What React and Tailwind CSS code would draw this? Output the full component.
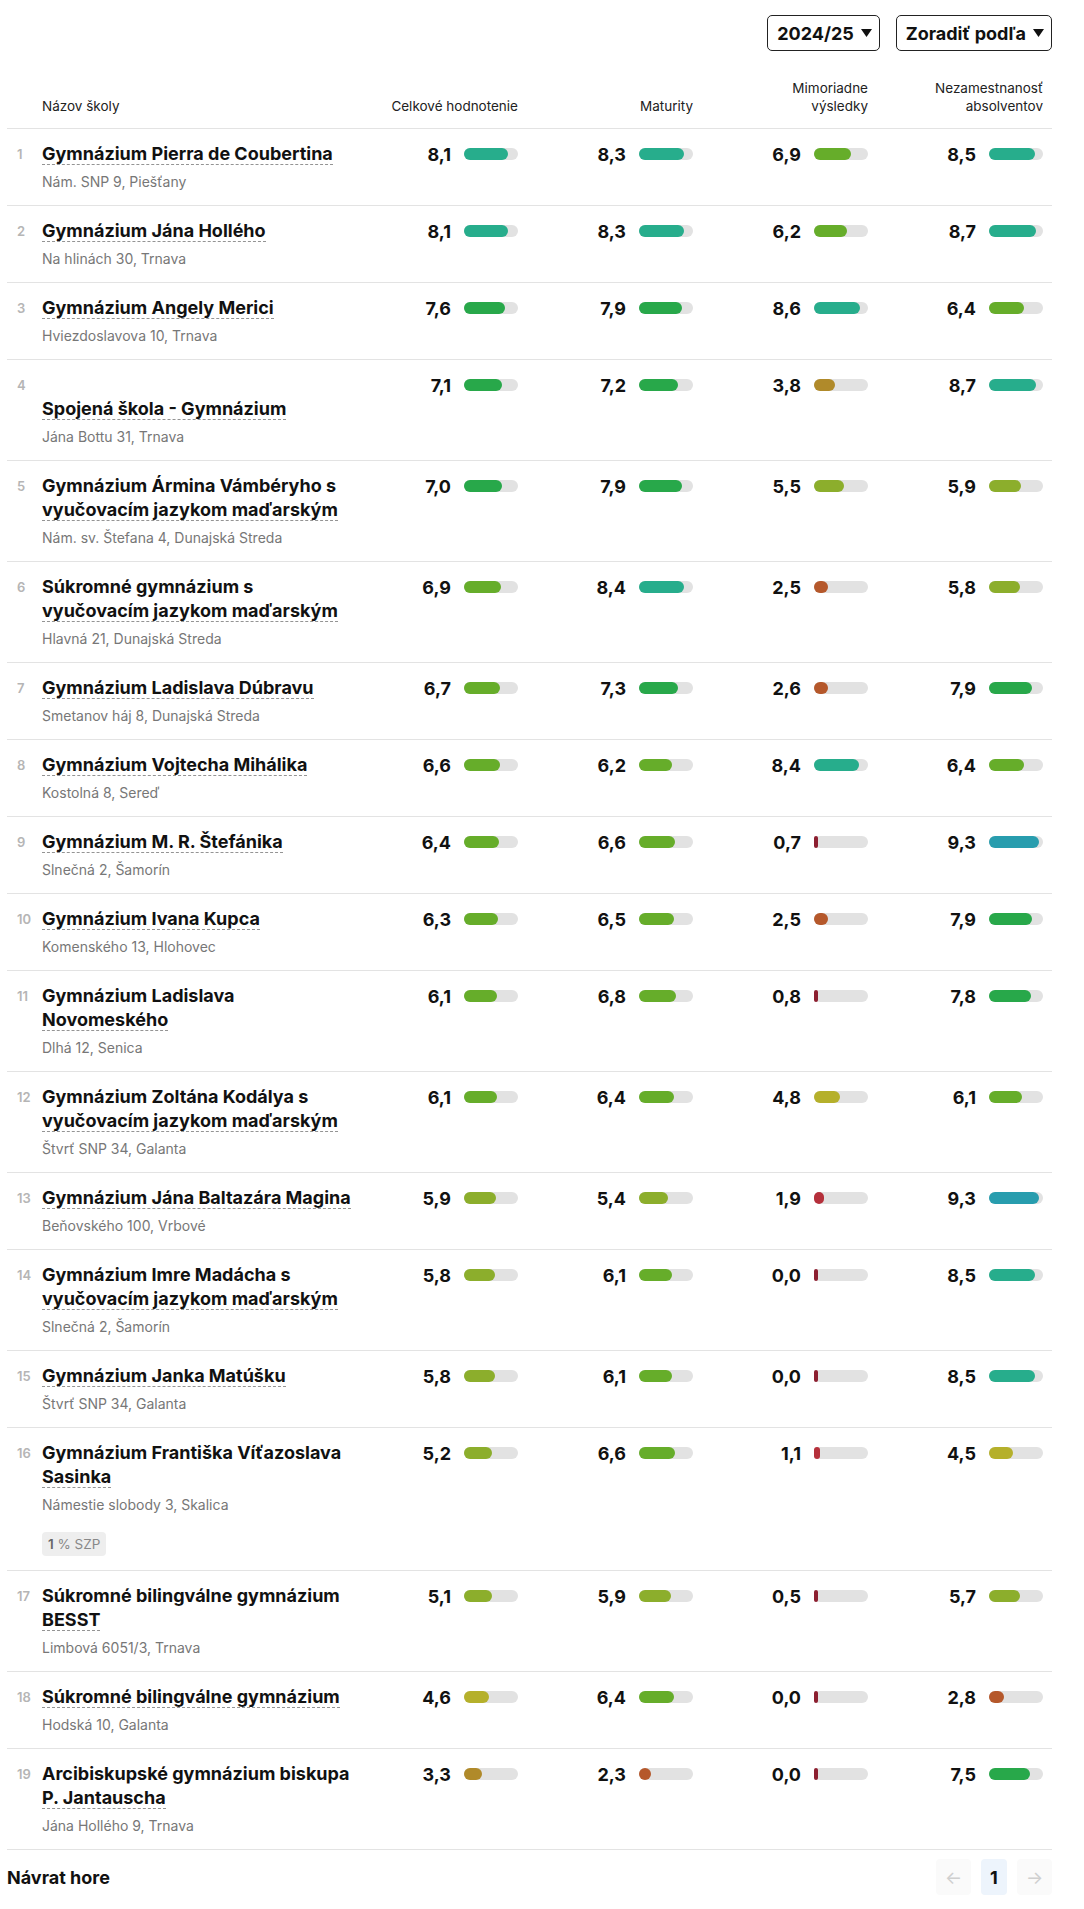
import React from 'react';

const ROWS = [
  { name: ['Gymnázium Pierra de Coubertina'], addr: 'Nám. SNP 9, Piešťany', s: [8.1, 8.3, 6.9, 8.5] },
  { name: ['Gymnázium Jána Hollého'], addr: 'Na hlinách 30, Trnava', s: [8.1, 8.3, 6.2, 8.7] },
  { name: ['Gymnázium Angely Merici'], addr: 'Hviezdoslavova 10, Trnava', s: [7.6, 7.9, 8.6, 6.4] },
  { name: ['', 'Spojená škola - Gymnázium'], addr: 'Jána Bottu 31, Trnava', s: [7.1, 7.2, 3.8, 8.7] },
  { name: ['Gymnázium Ármina Vámbéryho s', 'vyučovacím jazykom maďarským'], addr: 'Nám. sv. Štefana 4, Dunajská Streda', s: [7.0, 7.9, 5.5, 5.9] },
  { name: ['Súkromné gymnázium s', 'vyučovacím jazykom maďarským'], addr: 'Hlavná 21, Dunajská Streda', s: [6.9, 8.4, 2.5, 5.8] },
  { name: ['Gymnázium Ladislava Dúbravu'], addr: 'Smetanov háj 8, Dunajská Streda', s: [6.7, 7.3, 2.6, 7.9] },
  { name: ['Gymnázium Vojtecha Mihálika'], addr: 'Kostolná 8, Sereď', s: [6.6, 6.2, 8.4, 6.4] },
  { name: ['Gymnázium M. R. Štefánika'], addr: 'Slnečná 2, Šamorín', s: [6.4, 6.6, 0.7, 9.3] },
  { name: ['Gymnázium Ivana Kupca'], addr: 'Komenského 13, Hlohovec', s: [6.3, 6.5, 2.5, 7.9] },
  { name: ['Gymnázium Ladislava', 'Novomeského'], addr: 'Dlhá 12, Senica', s: [6.1, 6.8, 0.8, 7.8] },
  { name: ['Gymnázium Zoltána Kodálya s', 'vyučovacím jazykom maďarským'], addr: 'Štvrť SNP 34, Galanta', s: [6.1, 6.4, 4.8, 6.1] },
  { name: ['Gymnázium Jána Baltazára Magina'], addr: 'Beňovského 100, Vrbové', s: [5.9, 5.4, 1.9, 9.3] },
  { name: ['Gymnázium Imre Madácha s', 'vyučovacím jazykom maďarským'], addr: 'Slnečná 2, Šamorín', s: [5.8, 6.1, 0.0, 8.5] },
  { name: ['Gymnázium Janka Matúšku'], addr: 'Štvrť SNP 34, Galanta', s: [5.8, 6.1, 0.0, 8.5] },
  { name: ['Gymnázium Františka Víťazoslava', 'Sasinka'], addr: 'Námestie slobody 3, Skalica', s: [5.2, 6.6, 1.1, 4.5], badge: true },
  { name: ['Súkromné bilingválne gymnázium', 'BESST'], addr: 'Limbová 6051/3, Trnava', s: [5.1, 5.9, 0.5, 5.7] },
  { name: ['Súkromné bilingválne gymnázium'], addr: 'Hodská 10, Galanta', s: [4.6, 6.4, 0.0, 2.8] },
  { name: ['Arcibiskupské gymnázium biskupa', 'P. Jantauscha'], addr: 'Jána Hollého 9, Trnava', s: [3.3, 2.3, 0.0, 7.5] },
];

// fill colour by whole-number band
const BAND = [
  'bg-[#8c1f30]', 'bg-[#b5303b]', 'bg-[#b5582b]', 'bg-[#b08a2a]', 'bg-[#b5b02b]',
  'bg-[#8cae2c]', 'bg-[#66ad2a]', 'bg-[#28a84a]', 'bg-[#27ad8c]', 'bg-[#289dae]',
];

const COLS = 'grid grid-cols-[35px_310px_175px_175px_175px_175px]';

function Caret() {
  return (
    <svg width="11" height="8" viewBox="0 0 11 8" className="ml-[7px]">
      <path d="M0 0 L11 0 L5.5 8 Z" fill="#111" />
    </svg>
  );
}

function Score({ v }) {
  const w = Math.max(4, (v / 10) * 54);
  return (
    <div className="flex justify-end items-center h-[24px] pr-[9px] gap-[13px]">
      <span className="text-[18px] font-bold text-[#111]">{v.toFixed(1).replace('.', ',')}</span>
      <div className="w-[54px] h-[12px] rounded-full bg-[#e2e2e2]">
        <div className={`h-full rounded-full ${BAND[Math.floor(v)]}`} style={{ width: w }} />
      </div>
    </div>
  );
}

function Row({ i, row }) {
  const last = row.name.length - 1;
  return (
    <div className={`${COLS} border-b border-[#e3e3e3] pt-[13px] pb-[14px]`}>
      <div className="pl-[10px] text-[13px] leading-[24px] font-semibold text-[#b5b5b5]">{i + 1}</div>
      <div>
        {row.name.map((line, k) => (
          <div key={k} className="text-[18px] leading-[24px] font-bold text-[#111] whitespace-nowrap">
            {line === '' ? '\u00a0' : (
              <span className={k === last ? 'border-b border-dashed border-[#949494]' : ''}>{line}</span>
            )}
          </div>
        ))}
        <div className="mt-[7px] text-[14px] leading-[18px] text-[#777]">{row.addr}</div>
        {row.badge && (
          <div className="mt-[18px] inline-flex items-center h-[24px] px-[6px] rounded bg-[#eeeeee] text-[13.5px] text-[#888]">
            <span className="font-semibold text-[#666]">1</span>&nbsp;% SZP
          </div>
        )}
      </div>
      {row.s.map((v, k) => <Score key={k} v={v} />)}
    </div>
  );
}

export default function App() {
  return (
    <div className="bg-white min-h-[1909px] font-['Inter',sans-serif] text-[#111]">
      <div className="w-[1045px] ml-[7px]">
        <div className="flex justify-end gap-4 pt-[15px]">
          <button className="flex items-center h-[36px] pl-[9px] pr-[7px] border border-[#222] rounded-[5px] text-[18px] font-bold">
            2024/25<Caret />
          </button>
          <button className="flex items-center h-[36px] pl-[9px] pr-[7px] border border-[#222] rounded-[5px] text-[18px] font-bold">
            Zoradiť podľa<Caret />
          </button>
        </div>

        <div className={`${COLS} h-[78px] items-end pb-[13px] border-b border-[#e3e3e3] text-[13.5px] leading-[18px] text-[#222]`}>
          <div />
          <div>Názov školy</div>
          <div className="text-right pr-[9px]">Celkové hodnotenie</div>
          <div className="text-right pr-[9px]">Maturity</div>
          <div className="text-right pr-[9px]">Mimoriadne<br />výsledky</div>
          <div className="text-right pr-[9px]">Nezamestnanosť<br />absolventov</div>
        </div>

        {ROWS.map((r, i) => <Row key={i} i={i} row={r} />)}

        <div className="flex justify-between items-center pt-[9px] pb-[13px]">
          <a className="text-[18px] font-bold text-[#111]">Návrat hore</a>
          <div className="flex items-center gap-[10px]">
            <div className="w-[35px] h-[36px] flex items-center justify-center rounded bg-[#fafafa] text-[#cfcfcf] text-[18px]">←</div>
            <div className="w-[26px] h-[36px] flex items-center justify-center rounded bg-[#edf4fc] text-[18px] font-bold text-[#111]">1</div>
            <div className="w-[35px] h-[36px] flex items-center justify-center rounded bg-[#fafafa] text-[#cfcfcf] text-[18px]">→</div>
          </div>
        </div>
      </div>
    </div>
  );
}
